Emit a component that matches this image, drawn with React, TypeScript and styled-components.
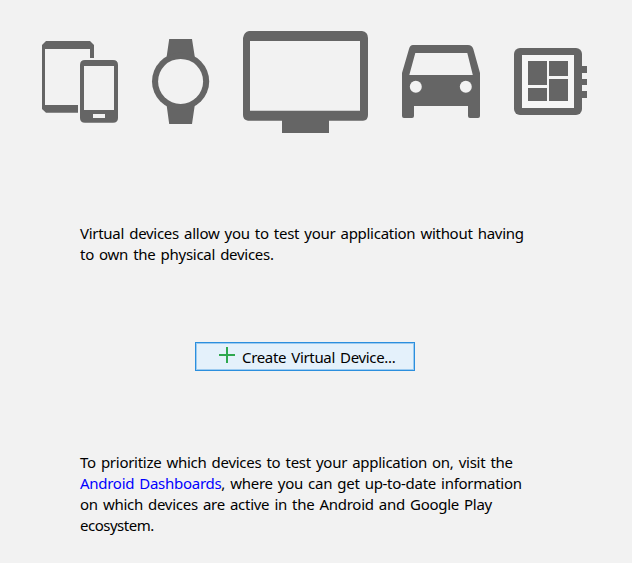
import React from "react";
import styled, { createGlobalStyle } from "styled-components";

const ink = "#656565";
const ground = "#f2f2f2";

const GlobalStyle = createGlobalStyle`
  body { margin: 0; background: ${ground}; }
`;

const Page = styled.main`
  box-sizing: border-box;
  width: 632px;
  height: 563px;
  overflow: hidden;
  display: flex;
  flex-direction: column;
  background: ${ground};
  color: #000;
  font-family: "Noto Sans", "Open Sans", sans-serif;
  font-size: 15px;
  line-height: 21px;
`;

const DeviceRow = styled.div`
  display: flex;
  align-items: flex-start;
  gap: 32px;
  height: 143px;
  padding: 30px 0 0 41px;
  box-sizing: border-box;
`;

const DeviceIcon = styled.svg`
  display: block;
  flex: none;
  fill: ${ink};
`;

const Paragraph = styled.p<{ $top: number }>`
  margin: ${(p) => p.$top}px 0 0 80px;
`;

const Line = styled.span<{ $spacing?: number }>`
  display: block;
  width: max-content;
  white-space: nowrap;
  letter-spacing: ${(p) => p.$spacing ?? -0.28}px;
  word-spacing: 1.5px;
`;

const Link = styled.a`
  color: #0000ff;
  text-decoration: none;
`;

const CreateButton = styled.button`
  display: flex;
  align-items: center;
  box-sizing: border-box;
  width: 220px;
  height: 29px;
  margin: 77px 0 0 195px;
  padding: 2px 0 0 23px;
  gap: 7px;
  border: 1px solid #2b8fde;
  box-shadow: inset 0 0 0 1px #9ccbf0;
  background: #e4f1fb;
  color: #000;
  font: inherit;
  white-space: nowrap;
`;

const Plus = styled.svg`
  display: block;
  flex: none;
  margin-top: -6px;
  fill: #2fa84f;
`;

const Mobile = () => (
  <DeviceIcon width="78" height="104" viewBox="41 30 78 104">
    <path d="M46 41H90L94 45V58H90V49H45V105H78V112.7H46L42 109V45Z" />
    <path
      fillRule="evenodd"
      d="M85 60H113Q118 60 118 65V118Q118 122.8 113 122.8H85Q80 122.8 80 118V65Q80 60 85 60ZM84 66V110H114V66ZM93 114V118H105V114Z"
    />
  </DeviceIcon>
);

const Watch = () => (
  <DeviceIcon width="60" height="104" viewBox="151 30 60 104">
    <path d="M169.2 39H192L194.8 57H166.6ZM166.6 105H194.8L192 124H169.2Z" />
    <circle cx="180.6" cy="81.4" r="28.6" />
    <circle cx="180.6" cy="81.4" r="22.5" fill={ground} />
  </DeviceIcon>
);

const Television = () => (
  <DeviceIcon width="126" height="104" viewBox="243 30 126 104">
    <path
      fillRule="evenodd"
      d="M249 31H362Q368 32 368 38V115Q368 120.7 363 120.7H329V133H282V120.7H248Q243 120 243 115V38Q244 32 249 31ZM250 41V110.8H360V41Z"
    />
  </DeviceIcon>
);

const Car = () => (
  <DeviceIcon width="80" height="104" viewBox="401 30 80 104">
    <path
      fillRule="evenodd"
      d="M413 45H468Q472 45 473.3 49L480 73V116Q480 118 478 118H470Q468 118 468 116V106H414V116Q414 118 412 118H404Q402 118 402 116V73L409 49Q410 45 413 45ZM415.3 53L409.3 75H472.8L467.3 53Z"
    />
    <circle cx="415.8" cy="86.8" r="6" fill={ground} />
    <circle cx="465.8" cy="86.8" r="6" fill={ground} />
  </DeviceIcon>
);

const Board = () => (
  <DeviceIcon width="75" height="104" viewBox="513 30 75 104">
    <rect x="514" y="48" width="68" height="67" rx="6" />
    <rect x="522" y="55" width="52" height="53" fill="#f6f6f6" />
    <path d="M528 61H547V85H528ZM549 61H568V76H549ZM528 88H547V101H528ZM549 79H568V101H549ZM581 66H587V73H581ZM581 79H587V85H581ZM581 91H587V98H581Z" />
  </DeviceIcon>
);

export default function App() {
  return (
    <Page>
      <GlobalStyle />
      <DeviceRow>
        <Mobile />
        <Watch />
        <Television />
        <Car />
        <Board />
      </DeviceRow>
      <Paragraph $top={80}>
        <Line>Virtual devices allow you to test your application without having</Line>
        <Line>to own the physical devices.</Line>
      </Paragraph>
      <CreateButton type="button">
        <Plus width="16" height="16" viewBox="0 0 16 16">
          <path d="M7 0H9V7H16V9H9V16H7V9H0V7H7Z" />
        </Plus>
        <Line $spacing={-0.33}>Create Virtual Device...</Line>
      </CreateButton>
      <Paragraph $top={81}>
        <Line>To prioritize which devices to test your application on, visit the</Line>
        <Line>
          <Link>Android Dashboards</Link>, where you can get up-to-date information
        </Line>
        <Line>on which devices are active in the Android and Google Play</Line>
        <Line $spacing={-0.5}>ecosystem.</Line>
      </Paragraph>
    </Page>
  );
}
